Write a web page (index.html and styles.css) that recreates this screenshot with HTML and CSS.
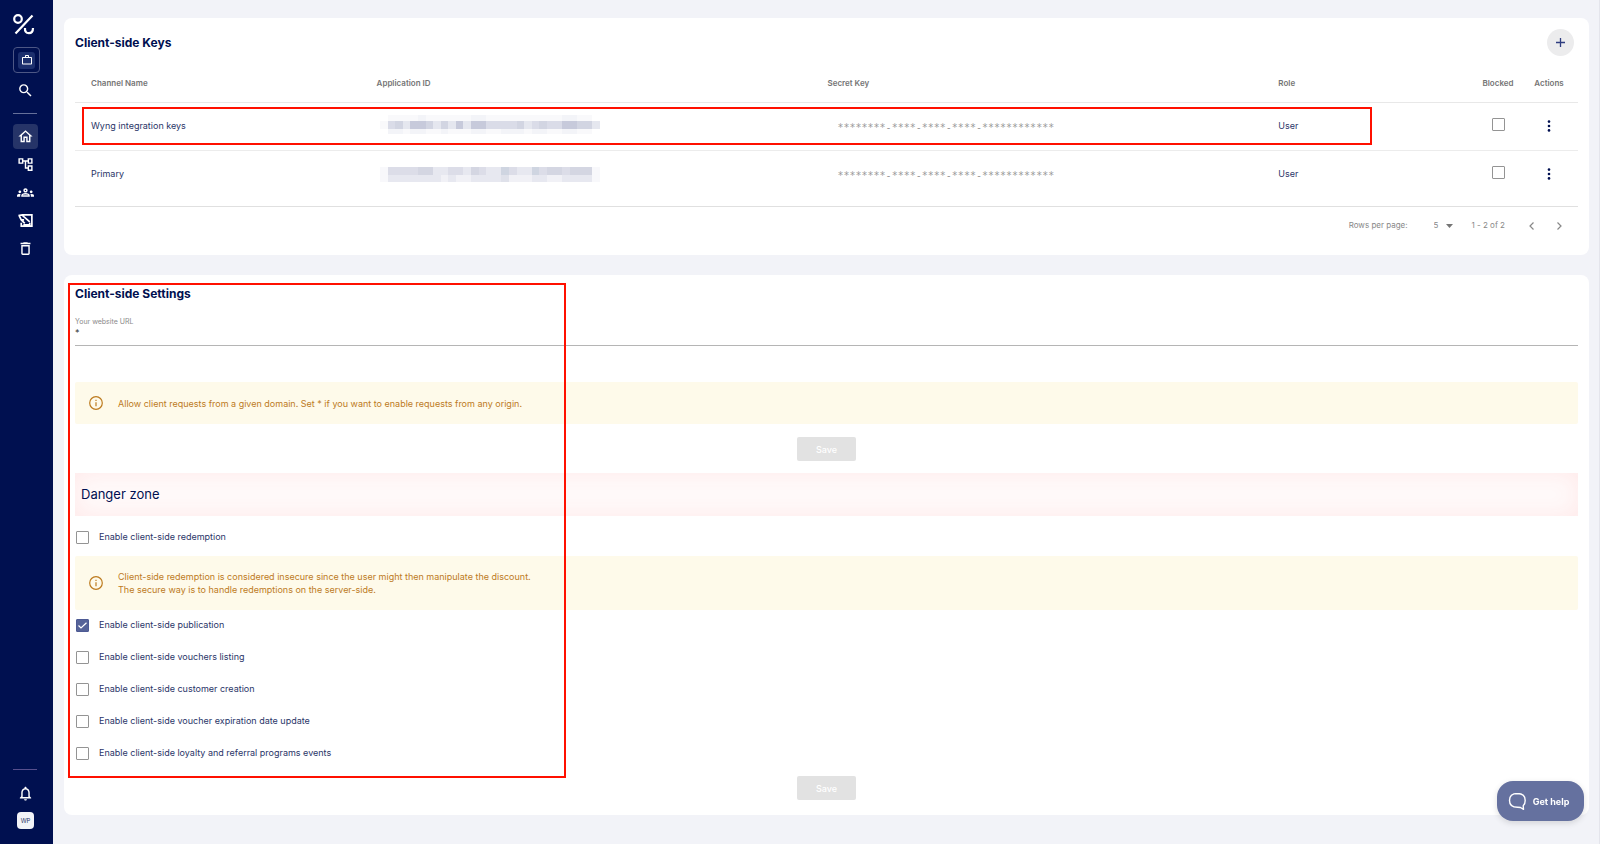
FILE: index.html
```html
<!DOCTYPE html>
<html lang="en">
<head>
<meta charset="utf-8">
<title>Client-side Keys</title>
<link rel="stylesheet" href="styles.css">
</head>
<body>
<div class="app">
  <nav class="sidebar" aria-label="Main">
    <a class="logo" href="#" aria-label="Home page"><svg width="22" height="22" viewBox="0 0 22 22" fill="none" stroke="#fff" stroke-width="2.200"><circle cx="5" cy="5" r="3.800"/><path d="M19.500 1.500 2.500 19.500M12 14c-.3 3.500 1.200 5.200 3.800 5.200s4.200-1.900 4.200-5.200"/></svg></a>
    <button class="project" aria-label="Project"><span class="project-inner"><svg class="ic-s" viewBox="0 0 24 24"><path d="M14 6V4h-4v2h4zM4 8v11h16V8H4zm16-2c1.110 0 2 .89 2 2v11c0 1.110-.89 2-2 2H4c-1.110 0-2-.89-2-2V8c0-1.110.89-2 2-2h4V4c0-1.110.89-2 2-2h4c1.110 0 2 .89 2 2v2h4z"/></svg></span></button>
    <button class="nav search" aria-label="Search"><svg class="ic" viewBox="0 0 24 24"><path d="M15.500 14h-.79l-.28-.27A6.471 6.471 0 0 0 16 9.500 6.500 6.500 0 1 0 9.500 16c1.610 0 3.090-.59 4.230-1.570l.27.28v.79l5 4.990L20.490 19l-4.990-5zm-6 0C7.010 14 5 11.990 5 9.500S7.010 5 9.500 5 14 7.010 14 9.500 11.990 14 9.500 14z"/></svg></button>
    <hr class="rule">
    <a class="nav active" href="#" aria-label="Dashboard"><svg class="ic" viewBox="0 0 24 24"><path d="M12 5.690l5 4.500V18h-2v-6H9v6H7v-7.810l5-4.500M12 3L2 12h3v8h6v-6h2v6h6v-8h3L12 3z"/></svg></a>
    <a class="nav" href="#" aria-label="Campaigns"><svg class="ic" viewBox="0 0 24 24"><path d="M22 11V3h-7v3H9V3H2v8h7V8h2v10h4v3h7v-8h-7v3h-2V8h2v3h7zM7 9H4V5h3v4zm10 6h3v4h-3v-4zm0-10h3v4h-3V5z"/></svg></a>
    <a class="nav" href="#" aria-label="Customers"><svg class="ic" viewBox="0 0 24 24"><path d="M4 13c1.100 0 2-.9 2-2s-.9-2-2-2-2 .9-2 2 .9 2 2 2zm1.130 1.100C4.760 14.040 4.390 14 4 14c-.99 0-1.930.21-2.780.58A2.010 2.010 0 0 0 0 16.430V18h4.500v-1.610c0-.83.23-1.610.63-2.290zM20 13c1.100 0 2-.9 2-2s-.9-2-2-2-2 .9-2 2 .9 2 2 2zm4 3.430c0-.81-.48-1.530-1.220-1.850A6.950 6.950 0 0 0 20 14c-.39 0-.76.04-1.130.1.400.68.630 1.460.630 2.290V18H24v-1.570zm-7.760-2.780A10.030 10.030 0 0 0 12 12.750c-1.630 0-3.070.39-4.240.9A2.988 2.988 0 0 0 6 16.390V18h12v-1.610c0-1.180-.68-2.260-1.760-2.740zM8.070 16c.09-.23.13-.39.91-.69a8.400 8.400 0 0 1 6.040 0c.77.3.81.46.91.69H8.070zM12 8c.55 0 1 .45 1 1s-.45 1-1 1-1-.45-1-1 .45-1 1-1m0-2c-1.660 0-3 1.340-3 3s1.340 3 3 3 3-1.340 3-3-1.340-3-3-3z"/></svg></a>
    <a class="nav" href="#" aria-label="Audit log"><svg class="ic ic-line" viewBox="0 0 24 24"><path d="M8 4h13v16H6v-5M2 5l5-1 3 3M3 5l3 6h4M10 7l8 7M6 11l5 5M9 18h9v-3"/></svg></a>
    <a class="nav" href="#" aria-label="Bin"><svg class="ic" viewBox="0 0 24 24"><path d="M6 19c0 1.100.9 2 2 2h8c1.100 0 2-.9 2-2V7H6v12zM8 9h8v10H8V9zm7.500-5l-1-1h-5l-1 1H5v2h14V4h-3.500z"/></svg></a>
    <hr class="rule rule-low">
    <button class="nav bell" aria-label="Notifications"><svg class="ic" viewBox="0 0 24 24"><path d="M12 22c1.100 0 2-.9 2-2h-4c0 1.100.9 2 2 2zm6-6v-5c0-3.070-1.630-5.640-4.500-6.320V4c0-.83-.67-1.500-1.500-1.500s-1.500.67-1.500 1.500v.68C7.640 5.360 6 7.920 6 11v5l-2 2v1h16v-1l-2-2zm-2 1H8v-6c0-2.480 1.510-4.500 4-4.500s4 2.020 4 4.500v6z"/></svg></button>
    <button class="avatar">WP</button>
  </nav>

  <main class="content">
    <section class="card keys">
      <header class="card-head">
        <h2 class="title">Client-side Keys</h2>
        <button class="add" aria-label="Add key"><svg width="11" height="11" viewBox="0 0 11 11" stroke="#2f3d80" stroke-width="1.300"><path d="M5.500 1v9M1 5.500h9"/></svg></button>
      </header>
      <table class="table">
        <colgroup><col class="c-name"><col class="c-id"><col class="c-key"><col><col class="c-blocked"><col class="c-actions"></colgroup>
        <thead><tr><th>Channel Name</th><th>Application ID</th><th>Secret Key</th><th>Role</th><th class="mid">Blocked</th><th class="mid">Actions</th></tr></thead>
        <tbody>
          <tr><td>Wyng integration keys</td>
            <td><svg class="mosaic" width="220" height="22" viewBox="0 0 29 22" preserveAspectRatio="none" shape-rendering="crispEdges"><path fill="#f9f9fb" d="M0 7h1v8H0zM1 1h27v6H1zM1 15h27v5H1z"/><path fill="#f3f4f8" d="M1 15h2v5H1zM4 15h2v5H4zM8 15h1v5H8zM12 15h2v5h-2zM16 15h3v5h-3zM20 15h2v5h-2zM24 15h2v5h-2zM5 1h1v6H5zM12 1h2v6h-2zM24 1h2v6h-2z"/><path fill="#dadce8" d="M1 7h27v8H1z"/><path fill="#d2d5e2" d="M2 7h1v8H2zM6 7h1v8H6zM8 7h1v8H8zM18 7h2v8h-2zM21 7h1v8h-1zM26 7h2v8h-2z"/><path fill="#c7cadb" d="M4 7h2v8H4zM10 7h1v8h-1zM12 7h2v8h-2zM24 7h2v8h-2z"/><path fill="#e5e7ef" d="M3 7h1v8H3zM7 7h1v8H7zM9 7h1v8H9zM11 7h1v8h-1zM19 7h1v8h-1zM28 7h1v8h-1z"/></svg></td>
            <td class="secret">********-****-****-****-************</td><td>User</td>
            <td class="mid tick"><input class="box" type="checkbox" aria-label="Block Wyng integration keys"></td>
            <td class="mid"><button class="more" aria-label="Actions"><svg width="4" height="12" viewBox="0 0 4 12" fill="#000f50"><circle cx="2" cy="1.600" r="1.300"/><circle cx="2" cy="6" r="1.300"/><circle cx="2" cy="10.400" r="1.300"/></svg></button></td></tr>
          <tr><td>Primary</td>
            <td><svg class="mosaic" width="220" height="22" viewBox="0 0 29 22" preserveAspectRatio="none" shape-rendering="crispEdges"><path fill="#f8f8fb" d="M0 5h1v15H0zM28 5h1v15h-1z"/><path fill="#dcdde8" d="M1 5h27v8H1z"/><path fill="#d4d6e2" d="M5 5h2v8H5zM12 5h1v8h-1zM22 5h2v8h-2zM25 5h3v8h-3z"/><path fill="#cfd5e1" d="M16 5h1v8h-1zM20 5h1v8h-1z"/><path fill="#e7e8f0" d="M7 5h1v8H7zM8 5h1v8H8zM11 5h1v8h-1zM14 5h2v8h-2zM18 5h2v8h-2zM1 13h27v7H1z"/><path fill="#f1f1f6" d="M8 13h1v7H8zM10 13h2v7h-2zM17 13h3v7h-3zM22 13h2v7h-2z"/><path fill="#dfe1ea" d="M16 13h1v7h-1z"/></svg></td>
            <td class="secret">********-****-****-****-************</td><td>User</td>
            <td class="mid tick"><input class="box" type="checkbox" aria-label="Block Primary"></td>
            <td class="mid"><button class="more" aria-label="Actions"><svg width="4" height="12" viewBox="0 0 4 12" fill="#000f50"><circle cx="2" cy="1.600" r="1.300"/><circle cx="2" cy="6" r="1.300"/><circle cx="2" cy="10.400" r="1.300"/></svg></button></td></tr>
        </tbody>
      </table>
      <footer class="pager">
        <label for="rows">Rows per page:</label>
        <span class="select"><select id="rows"><option>5</option></select><svg width="7" height="4" viewBox="0 0 7 4"><path d="M0 0h7L3.500 4z" fill="#757575"/></svg></span>
        <span class="range">1 - 2 of 2</span>
        <button class="page" aria-label="Previous page"><svg width="6" height="8" viewBox="0 0 6 8"><path d="M4.500.5 1 4l3.500 3.500"/></svg></button>
        <button class="page" aria-label="Next page"><svg width="6" height="8" viewBox="0 0 6 8"><path d="M1.500.5 5 4 1.500 7.500"/></svg></button>
      </footer>
      <div class="mark mark-row"></div>
    </section>

    <section class="card settings">
      <h2 class="title">Client-side Settings</h2>
      <div class="field"><label for="url">Your website URL</label><input id="url" type="text" value="*"></div>
      <div class="note"><svg class="info" viewBox="0 0 14 14"><circle cx="7" cy="7" r="6.300"/><path d="M7 6.200v4M7 3.800v1.300"/></svg><p>Allow client requests from a given domain. Set * if you want to enable requests from any origin.</p></div>
      <button class="save" disabled>Save</button>
      <h3 class="danger">Danger zone</h3>
      <label class="option option-alone"><input class="box" type="checkbox"><span>Enable client-side redemption</span></label>
      <div class="note"><svg class="info" viewBox="0 0 14 14"><circle cx="7" cy="7" r="6.300"/><path d="M7 6.200v4M7 3.800v1.300"/></svg><p>Client-side redemption is considered insecure since the user might then manipulate the discount.<br>The secure way is to handle redemptions on the server-side.</p></div>
      <div class="options">
        <label class="option"><input class="box" type="checkbox" checked><span>Enable client-side publication</span></label>
        <label class="option"><input class="box" type="checkbox"><span>Enable client-side vouchers listing</span></label>
        <label class="option"><input class="box" type="checkbox"><span>Enable client-side customer creation</span></label>
        <label class="option"><input class="box" type="checkbox"><span>Enable client-side voucher expiration date update</span></label>
        <label class="option"><input class="box" type="checkbox"><span>Enable client-side loyalty and referral programs events</span></label>
      </div>
      <button class="save save-last" disabled>Save</button>
      <div class="mark mark-settings"></div>
    </section>
  </main>
  <button class="help"><svg width="19" height="19" viewBox="0 0 19 19" fill="none" stroke="#fff" stroke-width="1.400" stroke-linejoin="round"><path d="M9.500 1.500C4 1.500 1.500 3.500 1.500 8.500s2.500 6.800 8 6.800c1.200 0 2.200 0 3 .2l3 1.800-.3-3.500c1.500-1.200 2-3 2-5.300 0-5-2.200-7-7.700-7z"/></svg>Get help</button>
</div>
</body>
</html>
```

FILE: styles.css
```css
* { box-sizing: border-box; }
body { margin: 0; background: #f2f3f8; color: #2a3568; font: 9px/13px Inter, "Liberation Sans", sans-serif; }
button { border: 0; padding: 0; background: none; font: inherit; color: inherit; display: flex; align-items: center; justify-content: center; }
h2, h3, p { margin: 0; }
.app { display: flex; min-height: 100vh; border-right: 1px solid #e4e5ec; }

.sidebar { width: 53px; flex: none; background: #001050; padding: 14px 13px 15px; display: flex; flex-direction: column; align-items: flex-start; }
.logo { height: 22px; margin-bottom: 11px; }
.project { width: 27px; height: 26px; border: 1px solid #4d5785; border-radius: 4px; margin-bottom: 5px; }
.project-inner { width: 17px; height: 17px; border-radius: 3px; background: #1c2f6d; display: flex; align-items: center; justify-content: center; }
.ic-s { width: 12px; height: 12px; fill: #fff; }
.ic { width: 17px; height: 17px; fill: #fff; }
.ic-line { fill: none; stroke: #fff; stroke-width: 2.4; }
.nav { width: 25px; height: 25px; margin-bottom: 3px; display: flex; align-items: center; justify-content: center; border-radius: 4px; }
.active { background: #263468; }
.rule { width: 24px; height: 1px; border: 0; margin: 7px 0 10px; background: #66709a; flex: none; }
.rule-low { margin: auto 0 11px; background: #574f8d; }
.bell { margin-bottom: 6px; }
.avatar { width: 17px; height: 17px; margin-left: 4px; border-radius: 4px; background: #f2f3f8; color: #2a3568; font-size: 6px; }

.content { flex: 1; min-width: 0; padding: 18px 10px 28px 11px; display: flex; flex-direction: column; gap: 20px; }
.card { position: relative; background: #fff; border-radius: 8px; padding: 11px; }
.title { font-size: 12px; line-height: 16px; font-weight: 700; color: #000f50; }
.card-head { display: flex; align-items: center; justify-content: space-between; padding-right: 4px; }
.add { width: 27px; height: 27px; border-radius: 50%; background: #ececed; }

.table { width: 100%; table-layout: fixed; border-collapse: collapse; }
.c-name { width: 19%; }
.c-id, .c-key { width: 30%; }
.c-blocked { width: 44px; }
.c-actions { width: 58px; }
.table th, .table td { padding: 0 0 2px 16px; text-align: left; }
.table .mid { padding-left: 0; text-align: center; }
.table th { height: 46px; padding-top: 11px; padding-bottom: 1px; font-size: 8px; font-weight: 600; color: #757575; border-bottom: 1px solid #e8e8e8; }
.table td { height: 48px; }
.table td.tick { padding-bottom: 5px; }
.table tbody tr:first-child td { border-bottom: 1px solid #ececec; }
.table td.secret { padding: 2px 0 0 26px; font: 10px/13px "DejaVu Sans Mono", monospace; color: #999; }
.mosaic { display: block; margin-left: 3px; }
.more { display: inline-flex; vertical-align: middle; }
.box { appearance: none; flex: none; width: 13px; height: 13px; margin: 0; border: 1px solid #949494; border-radius: 1px; background: #fff; vertical-align: middle; }
.box:checked { border-color: #4d5a94; background: #566398 url("data:image/svg+xml,%3Csvg xmlns='http://www.w3.org/2000/svg' viewBox='0 0 11 11'%3E%3Cpath d='M1.500 5.500 4 8 9.500 2.800' fill='none' stroke='white' stroke-width='1.200'/%3E%3C/svg%3E"); }

.pager { display: flex; align-items: center; justify-content: flex-end; margin-top: 8px; padding: 12px 16px 12px 0; border-top: 1px solid #e0e0e0; color: #888; font-size: 8px; }
.select { display: flex; align-items: center; margin: 0 19px 0 26px; }
.select select { appearance: none; width: 12px; border: 0; padding: 0; background: none; font: inherit; color: inherit; }
.range { margin-right: 24px; }
.page { width: 6px; height: 13px; }
.page + .page { margin-left: 21px; }
.page path { fill: none; stroke: #888; stroke-width: 1.2; }

.field { display: flex; flex-direction: column; margin: 15px 0 36px; border-bottom: 1px solid #b5b5b5; }
.field label { font-size: 7px; line-height: 10px; color: #8a8a8a; }
.field input { height: 18px; border: 0; padding: 0 0 8px; background: none; font: inherit; line-height: 10px; color: #333; outline: 0; }
.note { display: flex; align-items: center; gap: 15px; padding: 14px; background: #fefaea; color: #bd7b1e; border-radius: 2px; }
.info { width: 14px; height: 14px; flex: none; fill: none; stroke: #bd7b1e; stroke-width: 1.2; }
.save { width: 59px; height: 24px; margin: 13px auto 12px; border-radius: 2px; background: #e2e2e2; color: #fff; font-weight: 500; }
.save-last { margin: 16px auto 4px; }
.danger { padding: 12px 6px; font-size: 13px; line-height: 19px; font-weight: 400; color: #000f50; background: #fffafa; box-shadow: inset 0 0 24px #ffe9e9; }
.option { display: flex; align-items: center; gap: 10px; padding-left: 1px; height: 14px; }
.option span { padding-bottom: 2px; }
.option-alone { height: 40px; padding-top: 2px; }
.options { display: grid; gap: 18px; padding-top: 8px; }
.mark { position: absolute; border: 2px solid #ff1000; pointer-events: none; }
.mark-row { top: 89px; left: 18px; right: 217px; height: 38px; }
.mark-settings { top: 8px; bottom: 37px; left: 4px; width: 498px; }

.help { position: fixed; right: 16px; bottom: 23px; width: 87px; height: 40px; padding-right: 4px; gap: 6px; border-radius: 16px; background: #65719f; color: #fff; font-weight: 700; box-shadow: 0 2px 6px #0002; }
```
